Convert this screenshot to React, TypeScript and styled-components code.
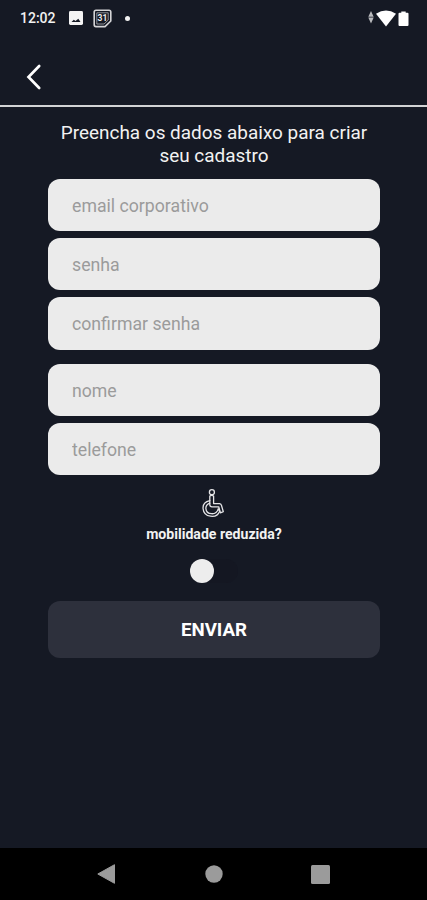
import React from 'react';
import styled, { createGlobalStyle } from 'styled-components';

const GlobalStyle = createGlobalStyle`
  * { box-sizing: border-box; }
  body { margin: 0; background: #151924; }
`;

const Screen = styled.div`
  display: flex;
  flex-direction: column;
  width: 427px;
  height: 900px;
  overflow: hidden;
  background: #151924;
  color: #f2f2f2;
  font-family: Roboto, sans-serif;
`;

const StatusBar = styled.div`
  display: flex;
  align-items: center;
  justify-content: space-between;
  height: 36px;
  padding: 0 18px 0 20px;
`;

const StatusGroup = styled.div<{ $gap: number }>`
  display: flex;
  align-items: center;
  gap: ${(p) => p.$gap}px;
`;

const Clock = styled.span`
  width: 35px;
  margin-right: 4px;
  font-size: 14px;
  font-weight: 500;
  line-height: 18px;
  white-space: nowrap;
`;

const Dot = styled.span`
  width: 5px;
  height: 5px;
  margin-left: 3px;
  border-radius: 50%;
  background: #f2f2f2;
`;

const Header = styled.header`
  display: flex;
  align-items: center;
  height: 71px;
  padding: 13px 0 0 26px;
  border-bottom: 2px solid #d2d3d5;
`;

const BackButton = styled.button`
  display: flex;
  padding: 0;
  border: 0;
  background: none;
`;

const Form = styled.form`
  display: flex;
  flex: 1;
  flex-direction: column;
  align-items: center;
  padding: 15px 47px 0 48px;
`;

const Title = styled.h1`
  margin: 0 0 12px;
  font-size: 18.95px;
  font-weight: 400;
  line-height: 22.5px;
  text-align: center;
  white-space: nowrap;
`;

const Fields = styled.div`
  display: flex;
  flex-direction: column;
  gap: 6.9px;
  width: 332px;
  margin-bottom: 14px;
`;

const Field = styled.input`
  width: 100%;
  height: 52.3px;
  padding: 1.5px 24px 0;
  border: 0;
  border-radius: 12px;
  background: #ebebeb;
  font-family: Roboto, sans-serif;
  font-size: 17.7px;
  outline: none;
  &::placeholder { color: #9b9b9b; opacity: 1; }
`;

const MobilityLabel = styled.label`
  display: flex;
  flex-direction: column;
  align-items: center;
  gap: 7px;
  margin-top: -1px;
  font-size: 14.1px;
  font-weight: 700;
  line-height: 18px;
`;

const Toggle = styled.span`
  display: flex;
  width: 48px;
  height: 24px;
  margin: 15.5px 0 18px;
  border-radius: 12px;
  background: #141722;
`;

const Thumb = styled.span`
  width: 24px;
  height: 24px;
  border-radius: 50%;
  background: #ededed;
`;

const SubmitButton = styled.button`
  width: 332px;
  height: 57px;
  padding: 2px 0 0;
  border: 0;
  border-radius: 12px;
  background: #2d303c;
  color: #fff;
  font-family: Roboto, sans-serif;
  font-size: 18.7px;
  font-weight: 700;
`;

const NavBar = styled.nav`
  display: grid;
  grid-template-columns: repeat(3, 107px);
  justify-content: center;
  justify-items: center;
  align-items: center;
  height: 52px;
  background: #000;
`;

const CalendarIcon = () => (
  <svg width="19" height="19" viewBox="0 0 19 19">
    <path d="M3 1.2H16Q17.8 1.2 17.8 3V12L12 17.6H3Q1.2 17.6 1.2 15.8V3Q1.2 1.2 3 1.2Z" fill="#151924" stroke="#d4d4d6" strokeWidth="1.6" />
    <path d="M3.8 3.8H15.2V11L11 15H3.8Z" fill="none" stroke="#c3c4c7" strokeWidth="0.7" />
    <text x="9.5" y="12.2" fill="#eee" fontFamily="Roboto, sans-serif" fontSize="8.5" fontWeight="700" textAnchor="middle">31</text>
  </svg>
);

const WheelchairIcon = () => (
  <svg width="26" height="30" viewBox="0 0 26 30" fill="none" stroke="#e4e4e6" strokeWidth="1.3" strokeLinejoin="round" strokeLinecap="round">
    <circle cx="10.9" cy="4.2" r="2.5" />
    <path d="M8.8 8Q10.8 6.7 12.6 8V15.6H18.6Q20.2 15.7 20.5 17.5L22.3 23.7L19.4 24.8L17.7 18.8H11Q8.9 18.8 8.8 16.8Z" />
    <path d="M8.8 12.6C4.2 13.6 1.7 16.8 2.1 20.7C2.8 29.4 15.6 31.2 18.7 23.2L17.2 20.8C15.4 27.8 5.4 27 4.9 20.6C4.7 18.1 6.3 16 8.8 15.1" />
  </svg>
);

export default function App() {
  return (
    <Screen>
      <GlobalStyle />
      <StatusBar>
        <StatusGroup $gap={10}>
          <Clock>12:02</Clock>
          <svg width="14" height="14" viewBox="0 0 14 14">
            <rect width="14" height="14" rx="1.4" fill="#f4f4f4" />
            <path d="M2.5 11L4.8 8.7L6.5 10L9.3 7.8L11.5 11Z" fill="#151924" />
          </svg>
          <CalendarIcon />
          <Dot />
        </StatusGroup>
        <StatusGroup $gap={2}>
          <svg width="6" height="14" viewBox="0 0 6 14">
            <path d="M3 0L5.7 5.7H.3ZM3 12.5L.3 6.5H5.7Z" fill="#b9babd" />
          </svg>
          <svg width="20" height="17" viewBox="0 0 20 17">
            <path d="M0 3.7Q10-2.5 20 3.7L10 16.5Z" fill="#fff" />
          </svg>
          <svg width="11" height="17" viewBox="0 0 11 17">
            <path d="M3.3 1.4H7.7V2.7H9.5Q10.5 2.7 10.5 3.7V15Q10.5 16 9.5 16H1.5Q.5 16 .5 15V3.7Q.5 2.7 1.5 2.7H3.3Z" fill="#fff" />
          </svg>
        </StatusGroup>
      </StatusBar>
      <Header>
        <BackButton type="button" aria-label="Voltar">
          <svg width="16" height="26" viewBox="0 0 16 26" fill="none" stroke="#fff" strokeWidth="2.7" strokeLinecap="round">
            <path d="M13.2 2L2.5 13L13.2 24" />
          </svg>
        </BackButton>
      </Header>
      <Form>
        <Title>
          Preencha os dados abaixo para criar
          <br />
          seu cadastro
        </Title>
        <Fields>
          <Field placeholder="email corporativo" />
          <Field placeholder="senha" />
          <Field placeholder="confirmar senha" />
        </Fields>
        <Fields>
          <Field placeholder="nome" />
          <Field placeholder="telefone" />
        </Fields>
        <MobilityLabel>
          <WheelchairIcon />
          mobilidade reduzida?
        </MobilityLabel>
        <Toggle>
          <Thumb />
        </Toggle>
        <SubmitButton type="button">ENVIAR</SubmitButton>
      </Form>
      <NavBar>
        <svg width="19" height="20" viewBox="0 0 19 20">
          <path d="M17.5.7V19.3L.8 10Z" fill="#9b9b9b" stroke="#9b9b9b" strokeLinejoin="round" />
        </svg>
        <svg width="18" height="18" viewBox="0 0 18 18">
          <circle cx="9" cy="9" r="8.7" fill="#9b9b9b" />
        </svg>
        <svg width="19" height="19" viewBox="0 0 19 19">
          <rect width="19" height="19" rx="1.5" fill="#9b9b9b" />
        </svg>
      </NavBar>
    </Screen>
  );
}
